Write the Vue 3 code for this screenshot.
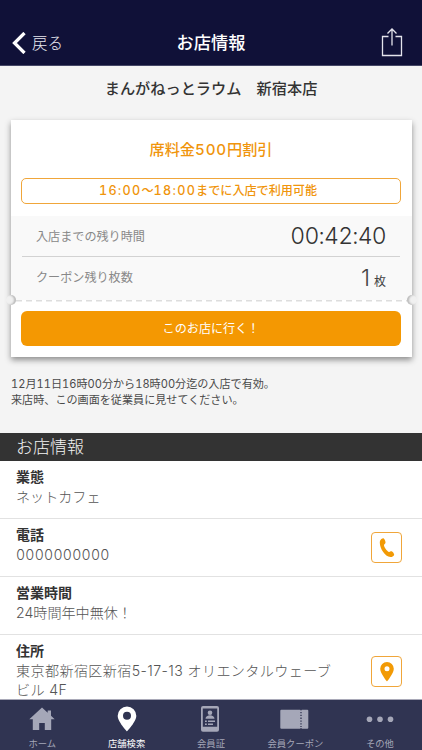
<template>
  <div class="screen">
    <header class="header">
      <button class="back">
        <svg width="14" height="22" viewBox="0 0 14 22"><path d="M12.500 1 2.500 11 12.500 21" fill="none" stroke="#fff" stroke-width="3.300" /></svg>
        <span>戻る</span>
      </button>
      <h1>お店情報</h1>
      <button class="share">
        <svg width="22" height="30" viewBox="0 0 22 30">
          <path d="M7.5 9.5H1.5V28.5H20.5V9.5H14.5M11 18.5V2M6.5 6.5 11 2l4.500 4.500" fill="none" stroke="#e4e4ec" stroke-width="1.300" />
        </svg>
      </button>
    </header>

    <main class="content">
      <h2 class="shop-name">まんがねっとラウム　新宿本店</h2>

      <section class="coupon">
        <h3 class="coupon-title">席料金<span class="num">500</span>円割引</h3>
        <p class="coupon-time"><span class="num">16:00</span>〜<span class="num">18:00</span>までに入店で利用可能</p>
        <div class="coupon-status">
          <div class="status-row">
            <span>入店までの残り時間</span>
            <span class="timer">00:42:40</span>
          </div>
          <div class="status-row">
            <span>クーポン残り枚数</span>
            <span class="count"><b>1</b>枚</span>
          </div>
        </div>
        <div class="cut-line"><i class="notch left"></i><i class="notch right"></i></div>
        <button class="go-button">このお店に行く！</button>
      </section>

      <p class="note">
        <span class="num">12</span>月<span class="num">11</span>日<span class="num">16</span>時<span class="num">00</span>分から<span class="num">18</span>時<span class="num">00</span>分迄の入店で有効。<br />
        来店時、この画面を従業員に見せてください。
      </p>

      <h2 class="section-title">お店情報</h2>
      <div v-for="item in shopInfo" :key="item.label" class="info-row">
        <div class="info-text">
          <h4>{{ item.label }}</h4>
          <p :class="item.icon">{{ item.value }}</p>
        </div>
        <button v-if="item.icon" class="info-button">
          <svg v-if="item.icon === 'phone'" width="16" height="20" viewBox="0 0 16 20">
            <path d="M1 3C1.500 1.500 3.500 0 4.500.3 5.500.8 6.700 3.300 6.500 4.800 6.300 5.900 5 6.200 5 7.200c0 1.800 3 6 4.800 6.700 1.200.3 1.700-.9 2.800-.6 1 .3 2.500 2.200 2.600 3.400 0 1.100-2.100 2.500-3.800 2.400C5.300 18.500-.3 8.500 1 3Z" fill="#f29a05" />
          </svg>
          <svg v-else width="14" height="20" viewBox="0 0 14 20">
            <path fill-rule="evenodd" d="M7 0a6.800 6.800 0 0 0-6.800 6.800C.2 11.500 7 19.500 7 19.500s6.800-8 6.800-12.700A6.800 6.800 0 0 0 7 0Zm0 4.300a2.500 2.500 0 1 1 0 5 2.500 2.500 0 0 1 0-5Z" fill="#f29a05" />
          </svg>
        </button>
      </div>
    </main>

    <nav class="tab-bar">
      <a v-for="tab in tabs" :key="tab.icon" class="tab" :class="{ active: tab.icon === activeTab }" @click="activeTab = tab.icon">
        <svg width="32" height="28" viewBox="0 0 32 28" fill="currentColor">
          <path v-if="tab.icon === 'home'" d="M16 2.500 3.300 14.300H6.800V25h6.400v-7h5.600v7h6.400V14.300h3.500L25 10.700V5.500h-3.300v2.300Z" />
          <path v-else-if="tab.icon === 'search'" fill-rule="evenodd" d="M16 1.500a9.300 9.300 0 0 0-9.300 9.300c0 6 9.300 15.700 9.300 15.700s9.300-9.700 9.300-15.700A9.300 9.300 0 0 0 16 1.500Zm0 5.300a4 4 0 1 1 0 8 4 4 0 0 1 0-8Z" />
          <g v-else-if="tab.icon === 'card'">
            <path fill-rule="evenodd" d="M8 1h14a2 2 0 0 1 2 2v21.700a2 2 0 0 1-2 2H8a2 2 0 0 1-2-2V3a2 2 0 0 1 2-2ZM7.800 3.500v18.300h14.400V3.500Z" />
            <circle cx="15" cy="7.700" r="2.300" />
            <path d="M10.500 13.800c0-4.800 9-4.800 9 0ZM10 15.500h1.800V17H10zM13 15.500h7V17h-7zM10 18.500h1.800V20H10zM13 18.500h5V20h-5z" />
          </g>
          <g v-else-if="tab.icon === 'coupon'">
            <path d="M2.300 4.700H21.200a.8.800 0 0 0 1.600 0h5.500a1 1 0 0 1 1 1v17a1 1 0 0 1-1 1H22.800a.8.800 0 0 0-1.600 0H2.300a1 1 0 0 1-1-1v-17a1 1 0 0 1 1-1Z" />
            <path d="M22 7v15" fill="none" stroke="#303452" stroke-width="1.300" stroke-dasharray="1.300 1.500" />
          </g>
          <g v-else>
            <circle cx="5.500" cy="14.300" r="2.800" />
            <circle cx="16" cy="14.300" r="2.800" />
            <circle cx="26.500" cy="14.300" r="2.800" />
          </g>
        </svg>
        <span>{{ tab.label }}</span>
      </a>
    </nav>
  </div>
</template>

<script setup>
import { ref } from 'vue'

const activeTab = ref('search')

const shopInfo = [
  { label: '業態', value: 'ネットカフェ' },
  { label: '電話', value: '0000000000', icon: 'phone' },
  { label: '営業時間', value: '24時間年中無休！' },
  { label: '住所', value: '東京都新宿区新宿5-17-13 オリエンタルウェーブビル 4F', icon: 'map' }
]

const tabs = [
  { icon: 'home', label: 'ホーム' },
  { icon: 'search', label: '店舗検索' },
  { icon: 'card', label: '会員証' },
  { icon: 'coupon', label: '会員クーポン' },
  { icon: 'more', label: 'その他' }
]
</script>

<style>
body {
  margin: 0;
  overflow: hidden;
}
</style>

<style scoped>
* {
  box-sizing: border-box;
  margin: 0;
  padding: 0;
}

.screen {
  display: flex;
  flex-direction: column;
  width: 422px;
  height: 750px;
  background: #f4f4f4;
  color: #333;
  font-family: 'Noto Sans CJK JP', sans-serif;
}

button {
  border: none;
  background: none;
  font-family: inherit;
}

svg {
  display: block;
  flex: none;
}

.num,
.info-row p,
.timer,
.count b {
  font-family: Inter, 'Noto Sans CJK JP', sans-serif;
}

.num,
.timer {
  font-feature-settings: 'tnum';
}

.header {
  display: flex;
  align-items: center;
  justify-content: space-between;
  flex: none;
  height: 66px;
  padding: 20px 19px 0 12px;
  background: #101138;
  border-bottom: 1px solid #454766;
  color: #fff;
}

.back {
  display: flex;
  align-items: center;
  gap: 6px;
  width: 90px;
  color: #e8e8f0;
  font-size: 15.5px;
  font-weight: 300;
  line-height: 22px;
}

.back span {
  padding-bottom: 1px;
}

.header h1 {
  font-size: 17.2px;
  font-weight: 500;
  line-height: 24px;
  padding-bottom: 1px;
}

.share {
  display: flex;
  justify-content: flex-end;
  width: 83px;
  padding-bottom: 1px;
}

.content {
  flex: 1;
  min-height: 0;
  overflow: hidden;
}

.shop-name {
  height: 54px;
  font-size: 15.2px;
  font-weight: 500;
  line-height: 43px;
  text-align: center;
}

.coupon {
  width: 401px;
  height: 237px;
  margin: 0 10px 0 11px;
  background: #fff;
  box-shadow: 0 3px 6px rgba(0, 0, 0, 0.42);
}

.coupon-title {
  height: 58px;
  padding-right: 1px;
  color: #f0950c;
  font-size: 15.2px;
  font-weight: 500;
  line-height: 57px;
  text-align: center;
}

.coupon-title .num {
  letter-spacing: 0.8px;
}

.coupon-time {
  height: 26px;
  margin: 0 11px 12px 10px;
  padding-right: 6px;
  border: 1.500px solid #f0a63a;
  border-radius: 5px;
  color: #f0950c;
  font-size: 12.1px;
  font-weight: 500;
  line-height: 22px;
  text-align: center;
}

.coupon-time .num {
  font-size: 12.600px;
  letter-spacing: 1.300px;
}

.coupon-status {
  height: 84px;
  padding: 0 12px 0 11px;
  background: #f9f9f9;
}

.status-row {
  display: flex;
  align-items: center;
  justify-content: space-between;
  height: 41px;
  padding: 0 14px;
  color: #888;
  font-size: 12.1px;
}

.status-row:first-child {
  border-bottom: 1px solid #d2d2d2;
}

.status-row span:first-child {
  padding-bottom: 2px;
}

.timer {
  color: #333;
  font-size: 23px;
  font-weight: 300;
  letter-spacing: -0.750px;
}

.count {
  color: #444;
  font-size: 12px;
}

.count b {
  margin-right: 4px;
  font-size: 23px;
  font-weight: 300;
}

.cut-line {
  position: relative;
  height: 11px;
  background: repeating-linear-gradient(90deg, #ddd 0 6px, transparent 6px 10px) 5px 0 / 391px 1.500px no-repeat;
}

.notch {
  position: absolute;
  top: -5px;
  width: 10px;
  height: 10px;
  border-radius: 50%;
  background: #f0f0f0;
}

.notch.left {
  left: -5px;
  box-shadow: inset -2px 0 2px #bbb;
}

.notch.right {
  right: -5px;
  box-shadow: inset 2px 0 2px #bbb;
}

.go-button {
  display: block;
  width: 380px;
  height: 35px;
  margin: 0 11px 0 10px;
  padding-bottom: 2px;
  border-radius: 6px;
  background: #f49802;
  color: #fff;
  font-size: 12.1px;
}

.note {
  height: 76px;
  padding: 19px 11px 0;
  color: #4a4a4a;
  font-size: 11.1px;
  line-height: 15px;
}

.section-title {
  height: 28px;
  padding-left: 16px;
  background: #333;
  color: #f4f4f4;
  font-size: 17px;
  font-weight: 300;
  line-height: 26px;
}

.info-row {
  display: flex;
  align-items: center;
  justify-content: space-between;
  padding: 0 20px 0 16px;
  background: #fff;
  border-bottom: 1px solid #e2e2e2;
}

.info-row:last-child .info-text {
  padding-bottom: 9px;
}

.info-text {
  width: 320px;
  padding: 5px 0 12px;
}

.info-row h4 {
  margin-bottom: 1px;
  font-size: 14px;
  font-weight: 700;
  line-height: 20px;
}

.info-row p {
  color: #555;
  font-size: 14.1px;
  font-weight: 300;
  line-height: 19px;
}

.info-row p.phone {
  font-feature-settings: 'tnum';
  letter-spacing: 0.250px;
}

.info-row p.map {
  letter-spacing: 0.380px;
}

.info-button {
  display: flex;
  align-items: center;
  justify-content: center;
  width: 31px;
  height: 31px;
  border: 1.500px solid #f0a63a;
  border-radius: 4px;
}

.tab-bar {
  display: flex;
  flex: none;
  height: 51px;
  background: #303452;
  border-top: 1px solid #a9a9b8;
}

.tab {
  display: flex;
  flex: 1;
  flex-direction: column;
  align-items: center;
  padding-top: 5px;
  color: #a5a7b8;
  cursor: pointer;
}

.tab span {
  padding-top: 3px;
  font-size: 9.300px;
  line-height: 14px;
}

.tab.active {
  color: #fff;
}
</style>
